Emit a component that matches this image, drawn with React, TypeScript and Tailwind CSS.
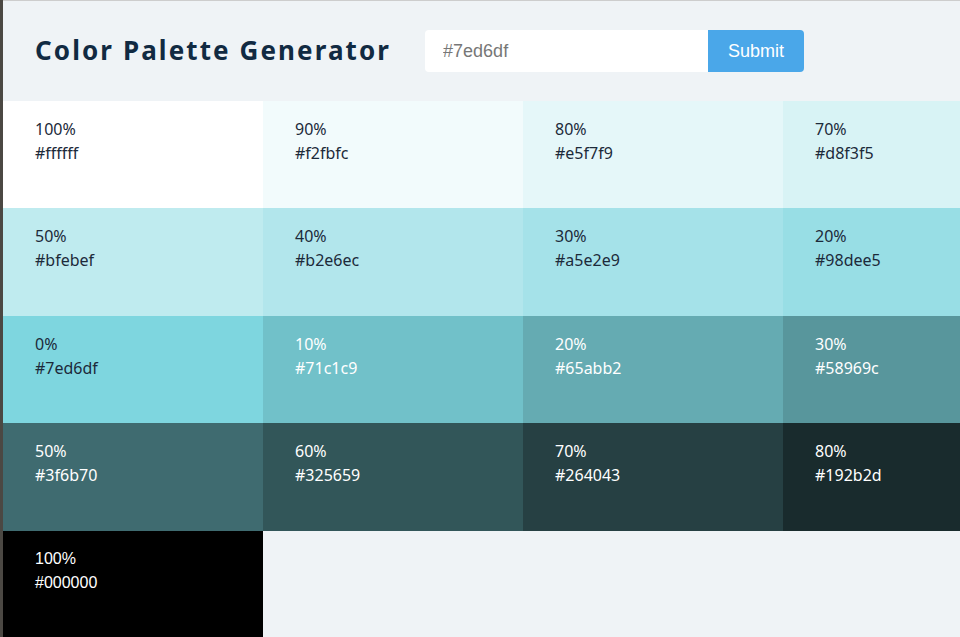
import { useState } from "react";

type Swatch = { label: string; hex: string; dark: boolean; arial?: boolean };

const swatches: Swatch[] = [
  { label: "100%", hex: "#ffffff", dark: false },
  { label: "90%", hex: "#f2fbfc", dark: false },
  { label: "80%", hex: "#e5f7f9", dark: false },
  { label: "70%", hex: "#d8f3f5", dark: false },
  { label: "60%", hex: "#cbeff2", dark: false },
  { label: "50%", hex: "#bfebef", dark: false },
  { label: "40%", hex: "#b2e6ec", dark: false },
  { label: "30%", hex: "#a5e2e9", dark: false },
  { label: "20%", hex: "#98dee5", dark: false },
  { label: "10%", hex: "#8bdae2", dark: false },
  { label: "0%", hex: "#7ed6df", dark: false },
  { label: "10%", hex: "#71c1c9", dark: true },
  { label: "20%", hex: "#65abb2", dark: true },
  { label: "30%", hex: "#58969c", dark: true },
  { label: "40%", hex: "#4c8086", dark: true },
  { label: "50%", hex: "#3f6b70", dark: true },
  { label: "60%", hex: "#325659", dark: true },
  { label: "70%", hex: "#264043", dark: true },
  { label: "80%", hex: "#192b2d", dark: true },
  { label: "90%", hex: "#0d1516", dark: true },
  { label: "100%", hex: "#000000", dark: true, arial: true },
];

export default function App() {
  const [color, setColor] = useState("");

  return (
    <div className="flex h-[637px] w-[960px] overflow-hidden bg-[#eff3f6]">
      <div className="w-[3px] shrink-0 bg-[#4b4843]" />
      <div className="flex min-w-0 flex-1 flex-col border-t border-[#cdcdcd]">
        <header className="flex h-[99.5px] shrink-0 items-center px-8">
          <h1 className="font-['Noto_Sans',sans-serif] text-[26px] font-bold tracking-[2.1px] text-[#112a42]">
            Color Palette Generator
          </h1>
          <form
            className="ml-[34px] flex h-[42px] font-['Liberation_Sans',Arial,sans-serif]"
            onSubmit={(e) => e.preventDefault()}
          >
            <input
              value={color}
              onChange={(e) => setColor(e.target.value)}
              placeholder="#7ed6df"
              className="w-[283px] rounded-l bg-white px-[18px] text-lg text-[#333] outline-none placeholder:text-[#777]"
            />
            <button
              type="submit"
              className="w-[96px] rounded-r bg-[#4aa7e9] text-lg text-white"
            >
              Submit
            </button>
          </form>
        </header>
        <div className="grid grid-cols-[repeat(5,260px)] auto-rows-[107.5px]">
          {swatches.map((s, i) => (
            <div
              key={i}
              style={{ backgroundColor: s.hex }}
              className={`px-8 pt-4 text-base leading-6 ${
                s.dark ? "text-white" : "text-[#1c2a3a]"
              } ${
                s.arial
                  ? "font-['Liberation_Sans',Arial,sans-serif]"
                  : "font-['Noto_Sans',sans-serif]"
              }`}
            >
              <p>{s.label}</p>
              <p>{s.hex}</p>
            </div>
          ))}
        </div>
      </div>
    </div>
  );
}
